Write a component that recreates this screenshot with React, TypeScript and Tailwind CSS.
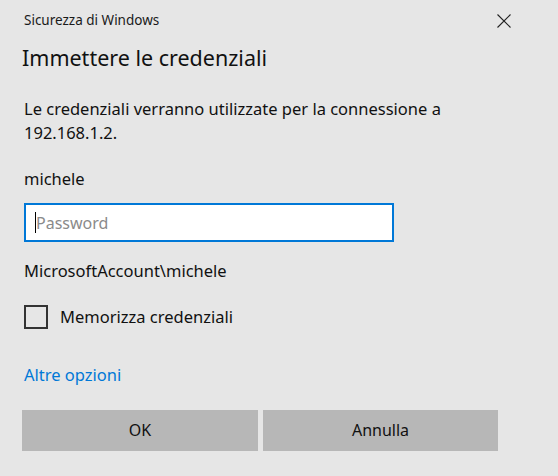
export default function App() {
  return (
    <div className="w-[558px] h-[476px] bg-[#e6e6e6] text-black font-['Noto_Sans',sans-serif] flex flex-col overflow-hidden">
      {/* Title bar */}
      <div className="flex items-center justify-between pl-[24px] pr-[47px] pt-[6px] h-[34px]">
        <span className="text-[13.5px] text-[#1a1a1a]">Sicurezza di Windows</span>
        <svg width="14" height="14" viewBox="0 0 14 14" className="mt-[1px]">
          <path d="M0.5 0.5 L13.5 13.5 M13.5 0.5 L0.5 13.5" stroke="#222" strokeWidth="1.1" fill="none" />
        </svg>
      </div>

      <div className="px-[22px]">
        <h1 className="text-[21.5px] leading-[30px] mt-[9px] text-[#111]">Immettere le credenziali</h1>
      </div>

      <div className="pl-[24px] flex flex-col">
        <p className="w-[440px] text-[16.5px] leading-[24px] mt-[24px] text-[#111]">
          Le credenziali verranno utilizzate per la connessione a 192.168.1.2.
        </p>
        <p className="text-[16.5px] leading-[24px] mt-[22px] text-[#111]">michele</p>

        <div className="mt-[12px] w-[370px] h-[39px] bg-white border-2 border-[#0078d7] flex items-center pl-[9px]">
          <span className="w-px h-[21px] bg-black" />
          <span className="text-[16px] text-[#8a8a8a]">Password</span>
        </div>

        <p className="text-[16.5px] leading-[24px] mt-[17px] text-[#111]">MicrosoftAccount\michele</p>

        <label className="flex items-center gap-[12px] mt-[22px]">
          <span className="w-[24px] h-[24px] border-2 border-[#333] bg-transparent" />
          <span className="text-[16.5px] text-[#111]">Memorizza credenziali</span>
        </label>

        <a className="text-[16.5px] leading-[24px] mt-[33px] text-[#0078d7]">Altre opzioni</a>
      </div>

      <div className="flex gap-[5px] pl-[22px] mt-[23px]">
        <button className="w-[236px] h-[41px] bg-[#b7b7b7] text-[16px] text-[#111]">OK</button>
        <button className="w-[235px] h-[41px] bg-[#b7b7b7] text-[16px] text-[#111]">Annulla</button>
      </div>
    </div>
  );
}
